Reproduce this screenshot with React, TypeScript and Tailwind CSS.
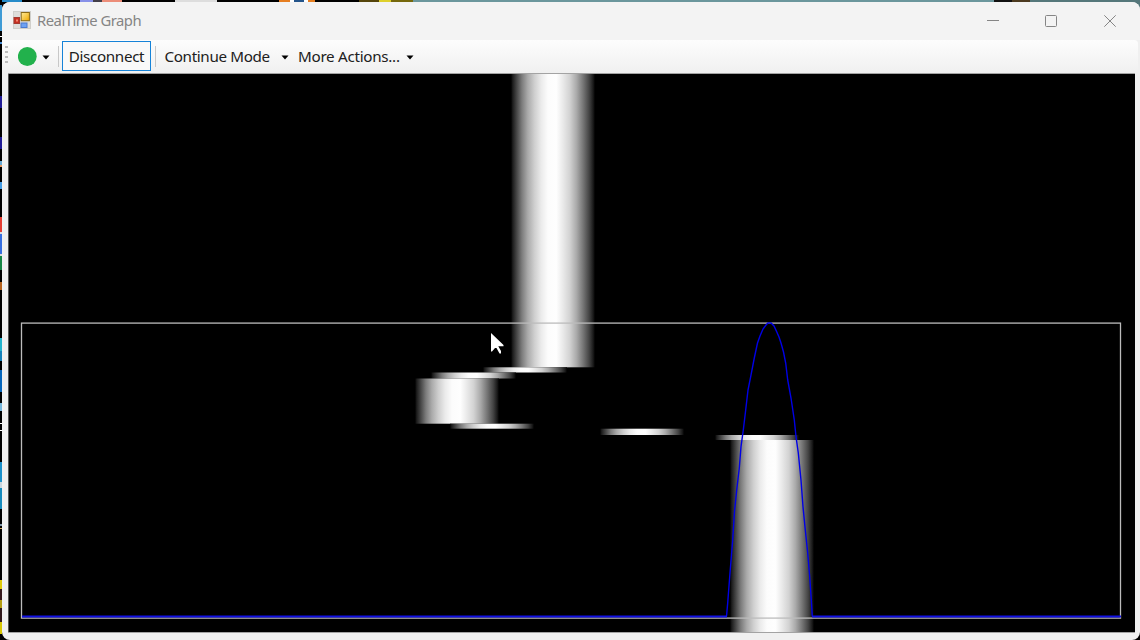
import React from "react";

type Bar = { x: number; y: number; w: number; h: number };

const bars: Bar[] = [
  { x: 511, y: 74, w: 84, h: 293.3 },
  { x: 483, y: 367.3, w: 84, h: 5.2 },
  { x: 431, y: 372.5, w: 85, h: 6 },
  { x: 415, y: 378.5, w: 84, h: 45.2 },
  { x: 450, y: 423.7, w: 84, h: 5 },
  { x: 600, y: 428.7, w: 84, h: 6.3 },
  { x: 715, y: 435, w: 84, h: 5 },
  { x: 730, y: 440, w: 84, h: 192 },
];

const shades: [number, string][] = [
  [0, "#000000"],
  [2, "#1c1c1c"],
  [7, "#484848"],
  [13, "#7c7c7c"],
  [20, "#aaaaaa"],
  [28, "#cfcfcf"],
  [36, "#ebebeb"],
  [44, "#fcfcfc"],
  [54, "#fefefe"],
  [62, "#e9e9e9"],
  [70, "#d2d2d2"],
  [78, "#aaaaaa"],
  [86, "#757575"],
  [93, "#444444"],
  [98, "#181818"],
  [100, "#000000"],
];

const curve =
  "726.5,616.5 727.7,603 730,573 732.7,540 734.5,511.5 736.7,490 739.3,468 741,446.6 743.3,430 745.7,410 748,390 750.7,376.7 754.3,358 757.5,343 760,336 763,329 766,325 768,323 771,323 774,326 776.7,331.7 779,337 781,343 783.5,352 785.7,363 787.7,380 791,398 794.3,420 796,436.7 798.3,453 801,480 803,506.7 805.3,530 807.7,553 809.7,576.7 811.3,600 812.3,616.5";

const edgeMarks: [number, number, string][] = [
  [5, 26, "#3f9bd5"],
  [36, 1, "#ffffff"],
  [42, 2, "#468bd1"],
  [96, 12, "#201b96"],
  [137, 12, "#201b96"],
  [161, 4, "#65a9d5"],
  [165, 2, "#e99b62"],
  [182, 7, "#459de5"],
  [217, 15, "#e43d32"],
  [232, 2, "#dddddd"],
  [234, 20, "#376fe0"],
  [254, 2, "#dddddd"],
  [256, 14, "#168645"],
  [282, 8, "#b6621d"],
  [338, 13, "#23b4cd"],
  [351, 10, "#1682ba"],
  [370, 22, "#0868bd"],
  [403, 8, "#77b7dc"],
  [423, 1, "#ffffff"],
  [430, 1, "#ffffff"],
  [462, 20, "#1b91cb"],
  [482, 6, "#cbd7df"],
  [488, 21, "#178bbd"],
  [524, 2, "#8097a8"],
  [528, 1, "#d5ab62"],
  [580, 9, "#dfcb09"],
  [589, 11, "#35191c"],
  [600, 8, "#b59e12"],
  [608, 14, "#30191b"],
  [622, 12, "#d8c704"],
];

const topMarks: [number, number, string][] = [
  [2, 20, "#268bc9"],
  [80, 13, "#8790e8"],
  [93, 9, "#423e48"],
  [102, 20, "#ec8d79"],
  [175, 42, "#dddddd"],
  [279, 11, "#e67e20"],
  [290, 4, "#ffffff"],
  [294, 10, "#24558b"],
  [304, 4, "#ffffff"],
  [308, 7, "#e67e20"],
  [359, 20, "#55450b"],
  [379, 12, "#ded02b"],
  [391, 22, "#75680c"],
  [413, 581, "#6b969c"],
  [994, 18, "#111111"],
  [1012, 18, "#4c3a20"],
  [1030, 110, "#55777a"],
];

function Desktop() {
  return (
    <svg className="absolute inset-0" width="1140" height="640" shapeRendering="crispEdges">
      <rect width="1140" height="640" fill="#000" />
      {edgeMarks.map(([y, h, c]) => (
        <rect key={y} x="0" y={y} width="2" height={h} fill={c} />
      ))}
      {topMarks.map(([x, w, c]) => (
        <rect key={x} x={x} y="0" width={w} height="2" fill={c} />
      ))}
      <rect x="1128" y="0" width="12" height="70" fill="#55777a" />
    </svg>
  );
}

function AppIcon() {
  return (
    <svg className="mr-[6px] shrink-0" width="18" height="18" viewBox="0 0 18 18">
      <defs>
        <linearGradient id="gold" x1="0" y1="0" x2="1" y2="1">
          <stop stopColor="#ffec9a" />
          <stop offset="1" stopColor="#efa900" />
        </linearGradient>
      </defs>
      <rect x=".5" y=".5" width="17" height="17" fill="#deddda" stroke="#d0cfcb" />
      <rect x="1" y="6.5" width="5.5" height="6" fill="#c62e20" stroke="#a33a30" />
      <rect x="3" y="8.5" width="2" height="2" fill="#f38872" />
      <rect x="8.2" y="1.5" width="8.2" height="8.2" fill="url(#gold)" stroke="#8b6b17" />
      <rect x="8" y="12" width="6" height="4.5" fill="#6da1f3" stroke="#4a7bd0" />
    </svg>
  );
}

function Arrow() {
  return (
    <svg className="relative top-px" width="8" height="5" viewBox="0 0 8 5">
      <path d="M.5 .5H7.5L4 4.4Z" fill="#000" />
    </svg>
  );
}

function TitleBar() {
  return (
    <header className="flex h-[38px] shrink-0 items-center bg-[#f3f3f3] pl-[11px]">
      <div className="-mt-[2px]">
        <AppIcon />
      </div>
      <h1 className="w-[110px] whitespace-nowrap pb-[2px] text-[14.8px] leading-5 tracking-[-0.48px] text-[#858585]">
        RealTime Graph
      </h1>
      <svg className="ml-auto mr-[23px]" width="130" height="14" viewBox="0 0 130 14" fill="none" stroke="#858585">
        <path d="M0 6.5H12" />
        <rect x="58.5" y="1.5" width="11" height="11" rx="1" />
        <path d="M117.3 1.3L128.7 12.7M128.7 1.3L117.3 12.7" />
      </svg>
    </header>
  );
}

function Toolbar() {
  return (
    <nav className="mr-[2px] flex h-[33px] shrink-0 items-center rounded-tr-[4px] bg-gradient-to-b from-[#fdfdfd] to-[#f0f0f0] pb-px text-[15.2px] leading-5 text-[#202020]">
      <svg className="ml-[3px] shrink-0" width="4" height="20" fill="#bcbcbc">
        <rect x="0" y="0" width="3" height="2" />
        <rect x="0" y="5" width="3" height="2" />
        <rect x="0" y="10" width="3" height="2" />
        <rect x="0" y="15" width="3" height="2" />
      </svg>
      <button className="ml-[9px] flex items-center gap-[5px]" aria-label="Connected">
        <svg width="19" height="19">
          <circle cx="9.3" cy="9.5" r="9.4" fill="#22b14c" />
        </svg>
        <Arrow />
      </button>
      <span className="ml-[8px] h-[21px] w-px bg-[#c8c8c8]" />
      <button className="ml-[3px] flex h-[30px] w-[89px] items-center justify-center whitespace-nowrap border border-[#1683d8] bg-[#f9f9f9] pb-px tracking-[-0.34px]">
        Disconnect
      </button>
      <span className="ml-[4px] h-[21px] w-px bg-[#c8c8c8]" />
      <button className="ml-[8.5px] flex items-center whitespace-nowrap">
        <span className="w-[116.5px] pb-px text-left tracking-[-0.34px]">Continue Mode</span>
        <Arrow />
      </button>
      <button className="ml-[9px] flex items-center whitespace-nowrap">
        <span className="w-[108px] pb-px text-left tracking-[-0.28px]">More Actions...</span>
        <Arrow />
      </button>
    </nav>
  );
}

function Graph() {
  return (
    <svg className="ml-[6px] block shrink-0" width="1127" height="560" viewBox="8 73 1127 560">
      <defs>
        <linearGradient id="beam">
          {shades.map(([offset, color]) => (
            <stop key={offset} offset={`${offset}%`} stopColor={color} />
          ))}
        </linearGradient>
      </defs>
      <rect x="8" y="73" width="1127" height="559" fill="#000" />
      {bars.map((b) => (
        <rect key={b.y} x={b.x} y={b.y} width={b.w} height={b.h} fill="url(#beam)" />
      ))}
      <path d="M8 73.5H1135M8 632.5H1135" stroke="#a3a3a3" />
      <path d="M8.5 74V632" stroke="#555555" />
      <rect x="21.5" y="323.1" width="1099" height="295" fill="none" stroke="#bcbcbc" strokeWidth="1.3" />
      <polyline points={curve} fill="none" stroke="#0000e6" strokeWidth="1.4" />
      <path d="M22 616.5H727M812 616.5H1121" stroke="#1111e4" strokeWidth="1.8" />
      <path d="M491 333V351.5H492L495 348H496.5L499.5 353.5H501V351L498.3 346.2H503.5V345Z" fill="#fff" />
    </svg>
  );
}

export default function App() {
  return (
    <div className="relative h-[640px] w-[1140px] overflow-hidden bg-black font-['Noto_Sans',sans-serif]">
      <Desktop />
      <main className="relative ml-[2px] flex h-full w-[1138px] flex-col pt-[2px]">
        <section className="flex h-[638px] flex-col overflow-hidden rounded-[8px] bg-[#f0f0f0]">
          <TitleBar />
          <Toolbar />
          <Graph />
        </section>
      </main>
    </div>
  );
}
